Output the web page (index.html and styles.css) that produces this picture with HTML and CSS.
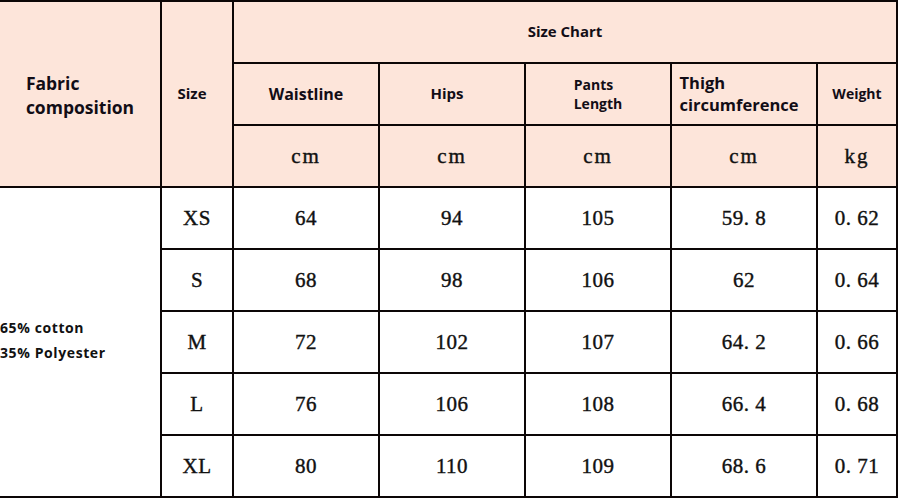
FILE: index.html
```html
<!DOCTYPE html>
<html lang="en">
<head>
<meta charset="utf-8">
<title>Size Chart</title>
<link rel="stylesheet" href="styles.css">
</head>
<body>
<div class="chart">
  <div class="cell head fabric"><span class="blk lg">Fabric<br>composition</span></div>
  <div class="cell head size"><span class="blk shift">Size</span></div>
  <div class="cell head title"><span class="blk md">Size Chart</span></div>

  <div class="cell head"><span class="blk xl">Waistline</span></div>
  <div class="cell head"><span class="blk md shift">Hips</span></div>
  <div class="cell head"><span class="blk sm">Pants<br>Length</span></div>
  <div class="cell head"><span class="blk lg2 shift">Thigh<br>circumference</span></div>
  <div class="cell head"><span class="blk">Weight</span></div>

  <div class="cell head unit">cm</div>
  <div class="cell head unit">cm</div>
  <div class="cell head unit">cm</div>
  <div class="cell head unit">cm</div>
  <div class="cell head unit">kg</div>

  <div class="cell material"><span class="mat">65% cotton<br>35% Polyester</span></div>

  <div class="cell num">XS</div><div class="cell num">64</div><div class="cell num">94</div><div class="cell num">105</div><div class="cell num">59. 8</div><div class="cell num">0. 62</div>
  <div class="cell num">S</div><div class="cell num">68</div><div class="cell num">98</div><div class="cell num">106</div><div class="cell num">62</div><div class="cell num">0. 64</div>
  <div class="cell num">M</div><div class="cell num">72</div><div class="cell num">102</div><div class="cell num">107</div><div class="cell num">64. 2</div><div class="cell num">0. 66</div>
  <div class="cell num">L</div><div class="cell num">76</div><div class="cell num">106</div><div class="cell num">108</div><div class="cell num">66. 4</div><div class="cell num">0. 68</div>
  <div class="cell num">XL</div><div class="cell num">80</div><div class="cell num">110</div><div class="cell num">109</div><div class="cell num">68. 6</div><div class="cell num">0. 71</div>
</div>
</body>
</html>
```

FILE: styles.css
```css
html, body {
  margin: 0;
  padding: 0;
  background: #ffffff;
}

.chart {
  width: 898px;
  box-sizing: border-box;
  display: grid;
  grid-template-columns: 160px 70px 144px 144px 144px 144px 78px;
  grid-template-rows: repeat(8, 60px);
  gap: 2px;
  padding: 2px 2px 2px 0;
  background: #0c0606;
}

.cell {
  display: flex;
  align-items: center;
  justify-content: center;
  background: #ffffff;
  color: #111111;
}

.head {
  background: #fde5da;
  font-family: "Open Sans", "DejaVu Sans", sans-serif;
  font-weight: 700;
  font-size: 14px;
  color: #120d16;
}

.fabric {
  grid-row: 1 / span 3;
}

.size {
  grid-row: 1 / span 3;
}

.title {
  grid-column: 3 / span 5;
}

.blk {
  display: inline-block;
  text-align: left;
  line-height: 1.3;
}

.shift {
  margin-right: 10px;
}

.size .shift {
  font-size: 15px;
}

.lg {
  font-size: 17.5px;
  line-height: 24px;
  padding-top: 2px;
}

.md {
  font-size: 15px;
}

.xl {
  font-size: 16px;
}

.sm {
  font-size: 14px;
  line-height: 19px;
}

.lg2 {
  font-size: 16.5px;
  line-height: 22.5px;
}

.unit {
  font-family: "Liberation Serif", "DejaVu Serif", serif;
  font-weight: 400;
  font-size: 21px;
  letter-spacing: 2px;
  color: #111111;
  -webkit-text-stroke: 0.4px #111111;
}

.material {
  grid-column: 1;
  grid-row: 4 / span 5;
  justify-content: flex-start;
}

.mat {
  font-family: "Open Sans", "DejaVu Sans", sans-serif;
  font-weight: 700;
  font-size: 14px;
  letter-spacing: 0.6px;
  line-height: 25px;
  color: #111111;
  padding-bottom: 4px;
}

.num {
  font-family: "Liberation Serif", "DejaVu Serif", serif;
  font-size: 21px;
  color: #111111;
  letter-spacing: 0.5px;
  -webkit-text-stroke: 0.4px #111111;
}
```
